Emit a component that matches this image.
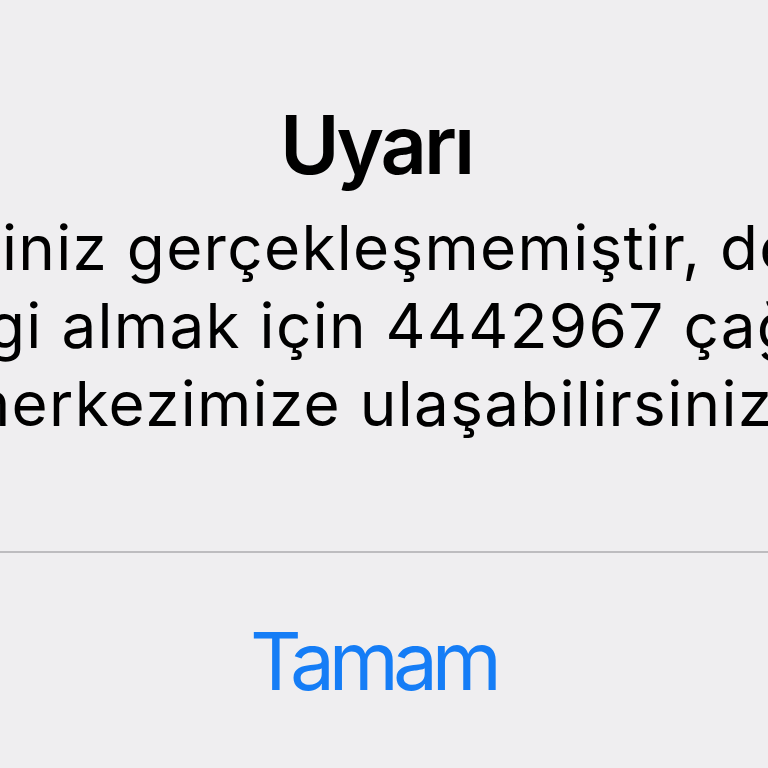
export default function App() {
  return (
    <div
      className="w-[768px] h-[768px] overflow-hidden bg-[#efeef0] text-black"
      style={{ fontFamily: 'Inter, "Noto Sans", sans-serif' }}
    >
      <div className="pt-[97px] pr-[16px] text-center text-[81px] leading-[96px] font-semibold tracking-[-3px]">
        Uyarı
      </div>

      <div className="mt-[16px] text-[62px] leading-[78px] font-normal tracking-[1.3px]">
        <div className="whitespace-nowrap ml-[2px]">iniz gerçekleşmemiştir, detaylı</div>
        <div className="whitespace-nowrap ml-[-13px]">gi almak için 4442967 çağrı</div>
        <div className="whitespace-nowrap ml-[-44px]">merkezimize ulaşabilirsiniz.</div>
      </div>

      <div className="mt-[108px] h-[2px] bg-[#bdbcbf]" />

      <div className="pt-[58px] pr-[22px] text-center text-[80px] leading-[100px] tracking-[-6px] text-[#157df6]">
        Tamam
      </div>
    </div>
  );
}
